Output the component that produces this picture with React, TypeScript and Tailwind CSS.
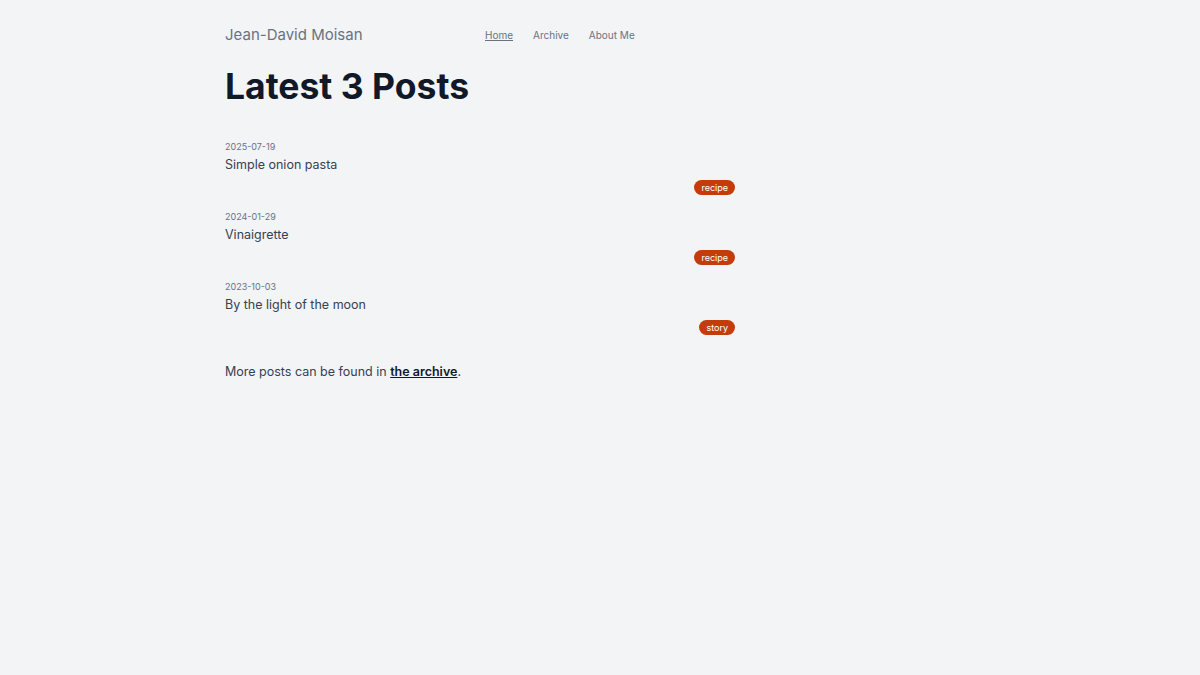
const posts = [
  { date: '2025-07-19', title: 'Simple onion pasta', tag: 'recipe' },
  { date: '2024-01-29', title: 'Vinaigrette', tag: 'recipe' },
  { date: '2023-10-03', title: 'By the light of the moon', tag: 'story' },
]

export default function App() {
  return (
    <div className="min-h-screen bg-[#f3f4f6] font-['Inter',sans-serif]">
      <div className="ml-[225px] w-[510px] pt-[24px]">
        <header className="flex h-[22px] items-center">
          <a className="w-[260px] text-[15px] text-gray-500">Jean-David Moisan</a>
          <nav className="flex gap-5 text-[10px] text-gray-500">
            <a className="underline">Home</a>
            <a>Archive</a>
            <a>About Me</a>
          </nav>
        </header>

        <h1 className="mt-[13px] text-[35.5px] leading-[56px] font-bold text-[#111827]">
          Latest 3 Posts
        </h1>

        <ul className="mt-[25px] flex flex-col">
          {posts.map((post) => (
            <li key={post.date} className="flex h-[70px] flex-col">
              <p className="text-[9px] leading-[14px] text-gray-500">{post.date}</p>
              <p className="mt-[2px] text-[12.5px] leading-[18px] text-gray-700">{post.title}</p>
              <div className="mt-[6px] flex justify-end">
                <span className="rounded-full bg-[#c43c0c] px-[7px] text-[9px] leading-[15px] text-white">
                  {post.tag}
                </span>
              </div>
            </li>
          ))}
        </ul>

        <p className="mt-[13px] text-[12.5px] text-gray-700">
          More posts can be found in{' '}
          <a className="font-semibold text-gray-900 underline">the archive</a>.
        </p>
      </div>
    </div>
  )
}
